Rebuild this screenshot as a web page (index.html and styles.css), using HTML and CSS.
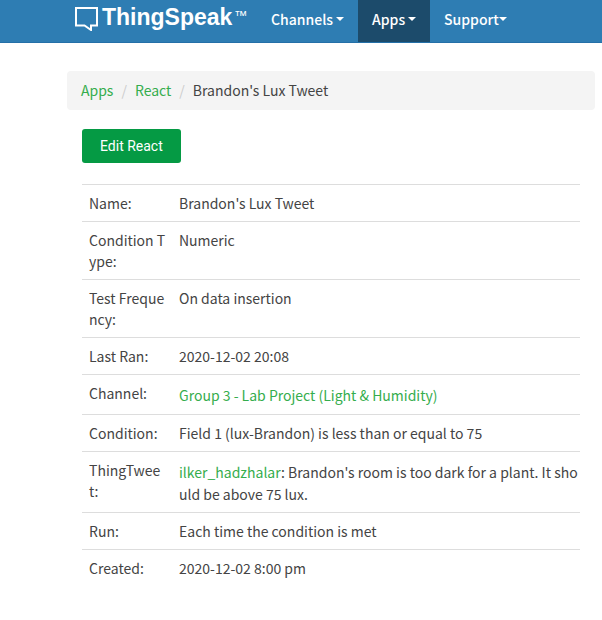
FILE: index.html
```html
<!DOCTYPE html>
<html lang="en">
<head>
<meta charset="utf-8">
<meta name="viewport" content="width=device-width, initial-scale=1">
<title>Brandon's Lux Tweet - ThingSpeak</title>
<link rel="stylesheet" href="styles.css">
</head>
<body>
<header class="navbar">
  <a class="brand" href="#">
    <svg class="brand-icon" viewBox="0 0 24 26" aria-hidden="true"><path d="M2 3H23V20.500H17V25L10.500 20.500H2Z" fill="none" stroke="currentColor" stroke-width="2"/></svg>
    <span class="brand-name">ThingSpeak</span><span class="brand-mark">™</span>
  </a>
  <nav class="menu">
    <a class="menu-item" href="#">Channels <span class="caret"></span></a>
    <a class="menu-item active" href="#">Apps <span class="caret"></span></a>
    <a class="menu-item" href="#">Support<span class="caret"></span></a>
  </nav>
</header>
<main class="page">
  <ol class="breadcrumb">
    <li><a href="#">Apps</a></li>
    <li><a href="#">React</a></li>
    <li>Brandon's Lux Tweet</li>
  </ol>
  <div class="content">
    <button class="button" type="button">Edit React</button>
    <table class="details">
      <tbody>
        <tr><th scope="row">Name:</th><td>Brandon's Lux Tweet</td></tr>
        <tr><th scope="row">Condition T<br>ype:</th><td>Numeric</td></tr>
        <tr><th scope="row">Test Freque<br>ncy:</th><td>On data insertion</td></tr>
        <tr><th scope="row">Last Ran:</th><td>2020-12-02 20:08</td></tr>
        <tr><th scope="row">Channel:</th><td><a href="#">Group 3 - Lab Project (Light &amp; Humidity)</a></td></tr>
        <tr><th scope="row">Condition:</th><td>Field 1 (lux-Brandon) is less than or equal to 75</td></tr>
        <tr><th scope="row">ThingTwee<br>t:</th><td><a href="#">ilker_hadzhalar</a>: Brandon's room is too dark for a plant. It should be above 75 lux.</td></tr>
        <tr><th scope="row">Run:</th><td>Each time the condition is met</td></tr>
        <tr><th scope="row">Created:</th><td>2020-12-02 8:00 pm</td></tr>
      </tbody>
    </table>
  </div>
</main>
</body>
</html>
```
FILE: styles.css
```css
* {
  box-sizing: border-box;
}

body {
  margin: 0;
  background: #fff;
  color: #444;
  font: 14px/21px "Noto Sans CJK SC", "Noto Sans", sans-serif;
}

a {
  color: #35ad4d;
  text-decoration: none;
}

.navbar {
  display: flex;
  height: 43px;
  padding-left: 74px;
  background: #2e7db3;
  border-bottom: 1px solid #2470a8;
}

.brand {
  display: flex;
  align-items: flex-start;
  width: 183px;
  padding-top: 5px;
  color: #fff;
  font-family: "Liberation Sans", Arial, sans-serif;
  font-weight: 700;
}

.brand-icon {
  width: 24px;
  height: 26px;
  margin-right: 4px;
}

.brand-name {
  font-size: 23px;
  line-height: 25px;
}

.brand-mark {
  margin-left: 2px;
  font-size: 13px;
  font-weight: 400;
  line-height: 21px;
}

.menu {
  display: flex;
}

.menu-item {
  display: flex;
  align-items: center;
  gap: 3px;
  padding: 0 14px 4px;
  color: #fff;
  font-weight: 500;
}

.menu-item:last-child {
  gap: 0;
}

.menu-item.active {
  background: #1c4b6b;
}

.caret {
  border: 4px solid transparent;
  border-top-color: currentColor;
  border-bottom: 0;
}

.page {
  padding: 28px 7px 28px 67px;
}

.breadcrumb {
  display: flex;
  margin: 0 0 19px;
  padding: 9px 14px;
  background: #f4f4f4;
  border-radius: 4px;
  list-style: none;
}

.breadcrumb li + li::before {
  content: "/";
  padding: 0 8px;
  color: #ccc;
}

.content {
  padding: 0 15px;
}

.button {
  display: block;
  height: 34px;
  margin-bottom: 21px;
  padding: 0 18px;
  border: 0;
  border-radius: 3px;
  background: #059a44;
  color: #fff;
  font: 14px/20px Roboto, sans-serif;
}

.details {
  width: 100%;
  border-collapse: separate;
  border-spacing: 0;
  table-layout: fixed;
}

.details th,
.details td {
  padding: 8px 2px 7px 7px;
  border-top: 1px solid #ddd;
  font-weight: 400;
  text-align: left;
  vertical-align: top;
}

.details th {
  width: 90px;
}

.details td {
  word-break: break-all;
}

.details td a {
  line-height: 24px;
}
```
